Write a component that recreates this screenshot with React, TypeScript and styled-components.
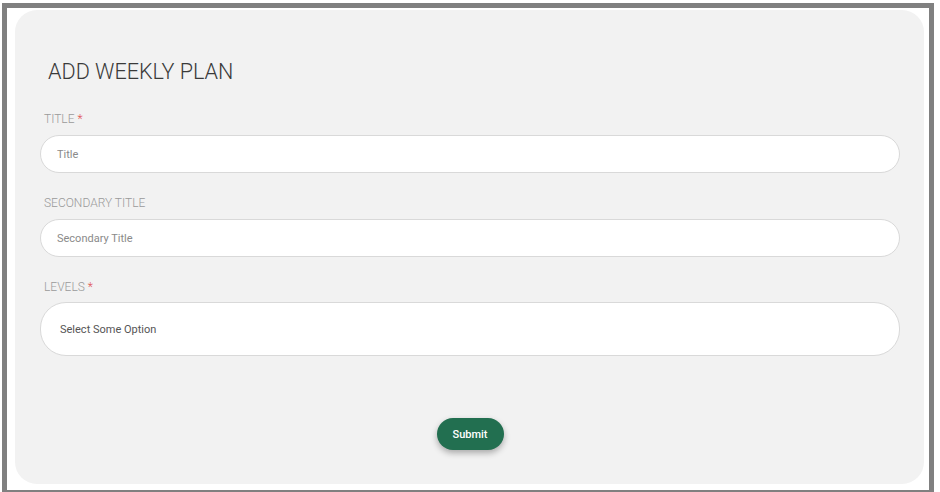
import styled, { createGlobalStyle } from 'styled-components';

const GlobalStyle = createGlobalStyle`
  body {
    margin: 0;
    background: #ffffff;
    font-family: Roboto, "Liberation Sans", sans-serif;
  }
`;

const Frame = styled.div`
  box-sizing: border-box;
  margin: 3px 0 0 2px;
  width: 932px;
  height: 492px;
  border: 5px solid #808080;
  padding: 2px 5px 0 8px;
`;

const Card = styled.form`
  box-sizing: border-box;
  height: 474px;
  background: #f2f2f2;
  border-radius: 22px;
  padding: 49px 24px 0 25px;
  display: flex;
  flex-direction: column;
`;

const Heading = styled.h2`
  margin: 0 0 27px 8px;
  font-size: 21.6px;
  line-height: 26px;
  font-weight: 300;
  color: #3a3a3a;
`;

const Field = styled.div<{ $tight?: boolean }>`
  display: flex;
  flex-direction: column;
  margin-bottom: 23px;
`;

const Label = styled.label<{ $tight?: boolean }>`
  margin: 0 0 ${p => (p.$tight ? '7px' : '8px')} 4px;
  font-size: 12px;
  line-height: 15px;
  font-weight: 300;
  color: #9a9a9a;
  text-transform: uppercase;
`;

const Required = styled.span`
  color: #e05050;
  margin-left: 3px;
`;

const Input = styled.input`
  box-sizing: border-box;
  width: 100%;
  height: 38px;
  border: 1px solid #d9d9d9;
  border-radius: 27px;
  background: #ffffff;
  padding: 0 16px;
  font-family: Roboto, "Liberation Sans", sans-serif;
  font-size: 11px;
  color: #555;
  outline: none;

  &::placeholder {
    color: #8a8a8a;
  }
`;

const Select = styled.div`
  box-sizing: border-box;
  height: 54px;
  border: 1px solid #d9d9d9;
  border-radius: 26px;
  background: #ffffff;
  padding: 0 19px;
  display: flex;
  align-items: center;
  font-size: 11px;
  color: #555;
`;

const Actions = styled.div`
  display: flex;
  justify-content: center;
  margin-top: 39px;
`;

const SubmitButton = styled.button`
  width: 67px;
  height: 32px;
  border: none;
  border-radius: 16px;
  background: #226f50;
  color: #ffffff;
  font-family: Roboto, "Liberation Sans", sans-serif;
  font-size: 11px;
  font-weight: 500;
  box-shadow: 0 3px 6px rgba(0, 0, 0, 0.3);
  cursor: pointer;
`;

const App: React.FC = () => {
  return (
    <>
      <GlobalStyle />
      <Frame>
        <Card onSubmit={e => e.preventDefault()}>
          <Heading>ADD WEEKLY PLAN</Heading>
          <Field>
            <Label>
              Title<Required>*</Required>
            </Label>
            <Input placeholder="Title" />
          </Field>
          <Field>
            <Label>Secondary Title</Label>
            <Input placeholder="Secondary Title" />
          </Field>
          <Field>
            <Label $tight>
              Levels<Required>*</Required>
            </Label>
            <Select>Select Some Option</Select>
          </Field>
          <Actions>
            <SubmitButton type="submit">Submit</SubmitButton>
          </Actions>
        </Card>
      </Frame>
    </>
  );
};

export default App;
